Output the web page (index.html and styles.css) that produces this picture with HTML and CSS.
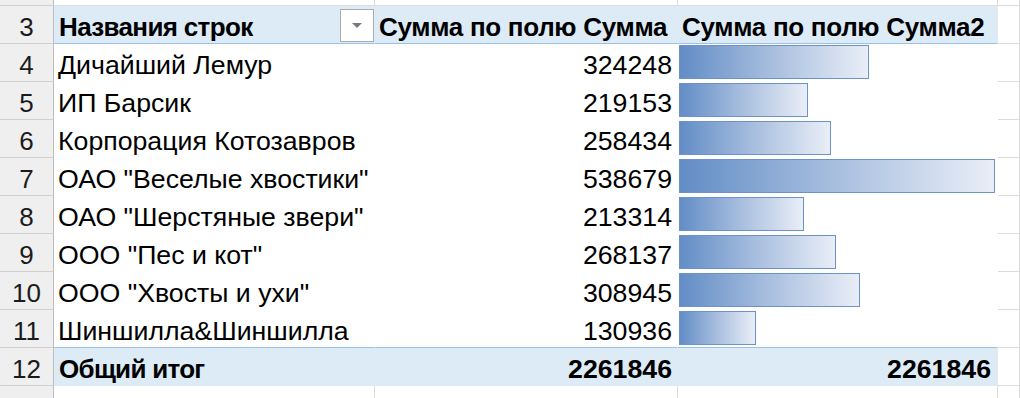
FILE: index.html
```html
<!DOCTYPE html>
<html lang="ru">
<head>
<meta charset="utf-8">
<title>Сводная таблица</title>
<link rel="stylesheet" href="styles.css">
</head>
<body>
<div class="sheet">
  <div class="row row-edge-top">
    <div class="cell rh"></div><div class="cell"></div><div class="cell"></div><div class="cell"></div><div class="cell"></div>
  </div>
  <div class="row head">
    <div class="cell rh">3</div>
    <div class="cell pv label-head"><span class="head-text">Названия строк</span><span class="filter-btn"><span class="arrow"></span></span></div>
    <div class="cell pv col-head">Сумма по полю Сумма</div>
    <div class="cell pv col-head">Сумма по полю Сумма2</div>
    <div class="cell"></div>
  </div>
  <div class="row">
    <div class="cell rh">4</div><div class="cell pv label">Дичайший Лемур</div><div class="cell pv num">324248</div>
    <div class="cell pv bar-cell"><div class="bar" style="width:190px"></div></div><div class="cell"></div>
  </div>
  <div class="row">
    <div class="cell rh">5</div><div class="cell pv label">ИП Барсик</div><div class="cell pv num">219153</div>
    <div class="cell pv bar-cell"><div class="bar" style="width:129px"></div></div><div class="cell"></div>
  </div>
  <div class="row">
    <div class="cell rh">6</div><div class="cell pv label">Корпорация Котозавров</div><div class="cell pv num">258434</div>
    <div class="cell pv bar-cell"><div class="bar" style="width:152px"></div></div><div class="cell"></div>
  </div>
  <div class="row">
    <div class="cell rh">7</div><div class="cell pv label">ОАО "Веселые хвостики"</div><div class="cell pv num">538679</div>
    <div class="cell pv bar-cell"><div class="bar" style="width:316px"></div></div><div class="cell"></div>
  </div>
  <div class="row">
    <div class="cell rh">8</div><div class="cell pv label">ОАО "Шерстяные звери"</div><div class="cell pv num">213314</div>
    <div class="cell pv bar-cell"><div class="bar" style="width:125px"></div></div><div class="cell"></div>
  </div>
  <div class="row">
    <div class="cell rh">9</div><div class="cell pv label">ООО "Пес и кот"</div><div class="cell pv num">268137</div>
    <div class="cell pv bar-cell"><div class="bar" style="width:157px"></div></div><div class="cell"></div>
  </div>
  <div class="row">
    <div class="cell rh">10</div><div class="cell pv label">ООО "Хвосты и ухи"</div><div class="cell pv num">308945</div>
    <div class="cell pv bar-cell"><div class="bar" style="width:181px"></div></div><div class="cell"></div>
  </div>
  <div class="row pre-total">
    <div class="cell rh">11</div><div class="cell pv label">Шиншилла&amp;Шиншилла</div><div class="cell pv num">130936</div>
    <div class="cell pv bar-cell"><div class="bar" style="width:77px"></div></div><div class="cell"></div>
  </div>
  <div class="row total">
    <div class="cell rh">12</div><div class="cell pv label-total">Общий итог</div><div class="cell pv num">2261846</div>
    <div class="cell pv num num-last">2261846</div><div class="cell"></div>
  </div>
  <div class="row row-edge-bottom">
    <div class="cell rh"></div><div class="cell"></div><div class="cell"></div><div class="cell"></div><div class="cell"></div>
  </div>
</div>
</body>
</html>
```

FILE: styles.css
```css
html, body {
  margin: 0;
  padding: 0;
  background: #ffffff;
}

body {
  font-family: "Liberation Sans", Arial, sans-serif;
  font-size: 26.7px;
  color: #000000;
  overflow: hidden;
}

.sheet {
  width: 1020px;
}

.row {
  display: grid;
  grid-template-columns: 54px 321px 303px 320px 1fr;
  height: 38px;
}

.row-edge-top {
  height: 6px;
}

.row-edge-bottom {
  height: 14px;
}

.cell {
  box-sizing: border-box;
  height: 100%;
  display: flex;
  align-items: flex-end;
  padding: 0 5px 3px 4px;
  line-height: 26px;
  white-space: nowrap;
  border-right: 1px solid #dcdcdc;
  border-bottom: 1px solid #dcdcdc;
  min-width: 0;
}

.row-edge-top .cell,
.row-edge-bottom .cell {
  padding: 0;
}

.row-edge-bottom .cell {
  border-bottom: none;
}

.rh {
  background: #efefef;
  border-right-color: #bcbcbc;
  border-bottom-color: #d0d0d0;
  justify-content: center;
  padding-left: 0;
  padding-right: 0;
  color: #1b1b1b;
  font-size: 26px;
}

/* pivot area: gridlines covered by cell fill */
.pv {
  border-right-color: transparent;
  border-bottom-color: transparent;
  background: #ffffff;
}

.head .pv {
  background: #ddebf7;
  border-bottom-color: #9bc2e6;
  font-weight: bold;
  font-size: 26px;
  letter-spacing: -0.3px;
}

.pre-total .pv {
  border-bottom-color: #9bc2e6;
}

.total .pv {
  background: #ddebf7;
  border-bottom-color: #ddebf7;
  font-weight: bold;
}

.label-head {
  justify-content: space-between;
  padding-left: 5px;
  padding-right: 0;
}

.head-text {
  letter-spacing: -0.65px;
}

.label-total {
  padding-left: 5px;
  font-size: 26px;
  letter-spacing: -0.7px;
}

.col-head {
  padding-left: 4px;
}

.num {
  justify-content: flex-end;
}

.num-last {
  padding-right: 6px;
}

.filter-btn {
  box-sizing: border-box;
  width: 34px;
  height: 33px;
  margin-bottom: -2px;
  background: #ffffff;
  border: 1px solid #acacac;
  display: flex;
  align-items: center;
  justify-content: center;
}

.arrow {
  width: 0;
  height: 0;
  border-left: 5px solid transparent;
  border-right: 5px solid transparent;
  border-top: 5px solid #7a7a7a;
}

.bar-cell {
  align-items: flex-start;
  padding: 1px 0 0 1px;
}

.bar {
  box-sizing: border-box;
  height: 34px;
  border: 1px solid #6b93ca;
  background: linear-gradient(to right, #628dc6 0%, #a9bfdf 50%, #e9eef7 100%);
}
```
